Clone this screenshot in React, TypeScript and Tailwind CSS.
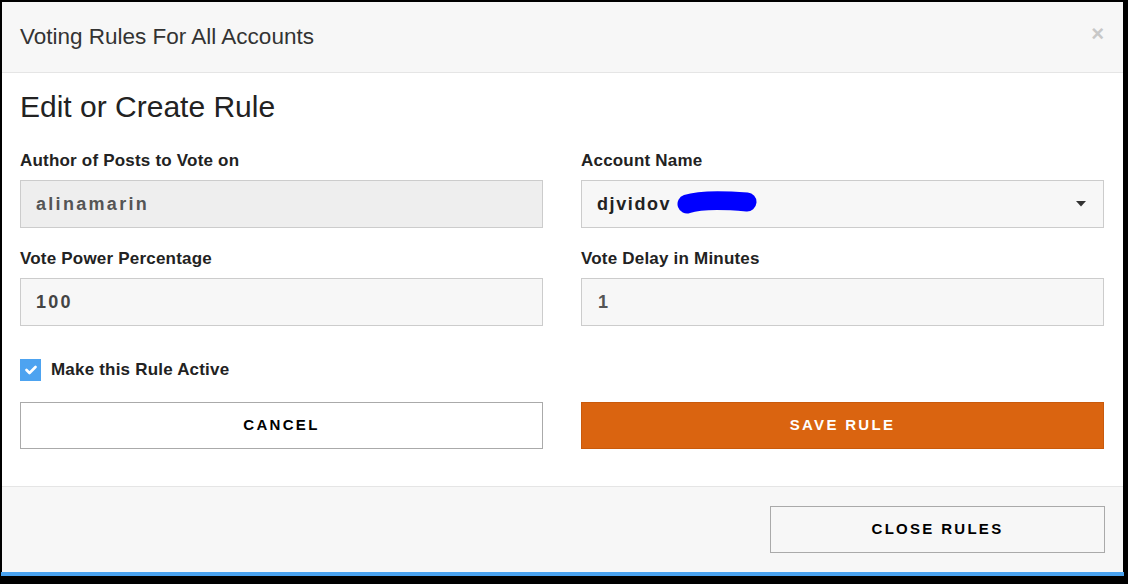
import React from "react";

const font = "font-['Liberation_Sans',Arial,sans-serif]";

function Label({ children }: { children: React.ReactNode }) {
  return (
    <div className="text-[17px] leading-[20px] font-bold text-[#222] mt-[1px] mb-[9px] tracking-[0.2px]">
      {children}
    </div>
  );
}

export default function App() {
  return (
    <div className={`w-[1128px] h-[584px] bg-black overflow-hidden ${font}`}>
      <div className="flex flex-col">
        <div className="ml-[2px] mt-[2px] w-[1121px] bg-white flex flex-col">
          {/* Header */}
          <div className="h-[71px] bg-[#f7f7f7] border-b border-[#e5e5e5] flex items-center justify-between pl-[18px] pr-[19px]">
            <div className="text-[22.5px] text-[#333] leading-none">Voting Rules For All Accounts</div>
            <div className="text-[22px] font-bold text-[#c8c8c8] leading-none -mt-[6px]">×</div>
          </div>
          {/* Body */}
          <div className="pl-[18px] pr-[19px] pt-[18px] pb-[37px]">
            <div className="text-[30px] leading-[32px] text-[#222] mb-[27px]">Edit or Create Rule</div>
            <div className="grid grid-cols-2 gap-x-[38px] gap-y-[20px]">
              <div>
                <Label>Author of Posts to Vote on</Label>
                <div className="h-[48px] bg-[#eeeeee] border border-[#cccccc] flex items-center px-[15px] text-[18px] font-bold text-[#555] tracking-[2.3px]">
                  alinamarin
                </div>
              </div>
              <div>
                <Label>Account Name</Label>
                <div className="h-[48px] bg-[#f7f7f7] border border-[#cccccc] flex items-center pl-[15px] pr-[17px] text-[18px] font-bold text-[#222] tracking-[1.6px]">
                  <span>djvidov</span>
                  <svg width="80" height="26" viewBox="0 0 80 26" className="ml-[6px]">
                    <path
                      d="M10 13 C 22 9, 45 9, 70 11"
                      stroke="#0000ff"
                      strokeWidth="19"
                      strokeLinecap="round"
                      fill="none"
                    />
                  </svg>
                  <div className="flex-1" />
                  <svg width="10" height="6" viewBox="0 0 10 6">
                    <path d="M0 0 L10 0 L5 5.5 Z" fill="#333" />
                  </svg>
                </div>
              </div>
              <div>
                <Label>Vote Power Percentage</Label>
                <div className="h-[48px] bg-[#f7f7f7] border border-[#cccccc] flex items-center px-[15px] text-[18px] font-bold text-[#444] tracking-[2.3px]">
                  100
                </div>
              </div>
              <div>
                <Label>Vote Delay in Minutes</Label>
                <div className="h-[48px] bg-[#f7f7f7] border border-[#cccccc] flex items-center px-[16px] text-[18px] font-bold text-[#555] tracking-[2.3px]">
                  1
                </div>
              </div>
            </div>
            <div className="flex items-center mt-[33px] h-[22px]">
              <div className="w-[21px] h-[22px] bg-[#4da3f0] flex items-center justify-center">
                <svg width="12" height="10" viewBox="0 0 12 10">
                  <path d="M1.5 5 L4.5 8 L10.5 2" stroke="white" strokeWidth="2.6" fill="none" strokeLinecap="round" strokeLinejoin="round" />
                </svg>
              </div>
              <div className="ml-[10px] text-[17px] font-bold text-[#222] tracking-[0.2px]">Make this Rule Active</div>
            </div>
            <div className="grid grid-cols-2 gap-x-[38px] mt-[21px]">
              <button className="h-[47px] bg-white border border-[#aaaaaa] text-[15px] font-bold text-black tracking-[2.3px] uppercase">
                Cancel
              </button>
              <button className="h-[47px] bg-[#da6410] border border-[#c95a0c] text-[15px] font-bold text-white tracking-[2.3px] uppercase">
                Save Rule
              </button>
            </div>
          </div>
          {/* Footer */}
          <div className="h-[86px] bg-[#f7f7f7] border-t border-[#e5e5e5] flex justify-end items-start pt-[19px] pr-[18px]">
            <button className="w-[335px] h-[47px] border border-[#aaaaaa] text-[15px] font-bold text-black tracking-[2.3px] uppercase">
              Close Rules
            </button>
          </div>
        </div>
        <div className="ml-[1px] w-[1123px] h-[4px] bg-[#4aa3f0]" />
      </div>
    </div>
  );
}
